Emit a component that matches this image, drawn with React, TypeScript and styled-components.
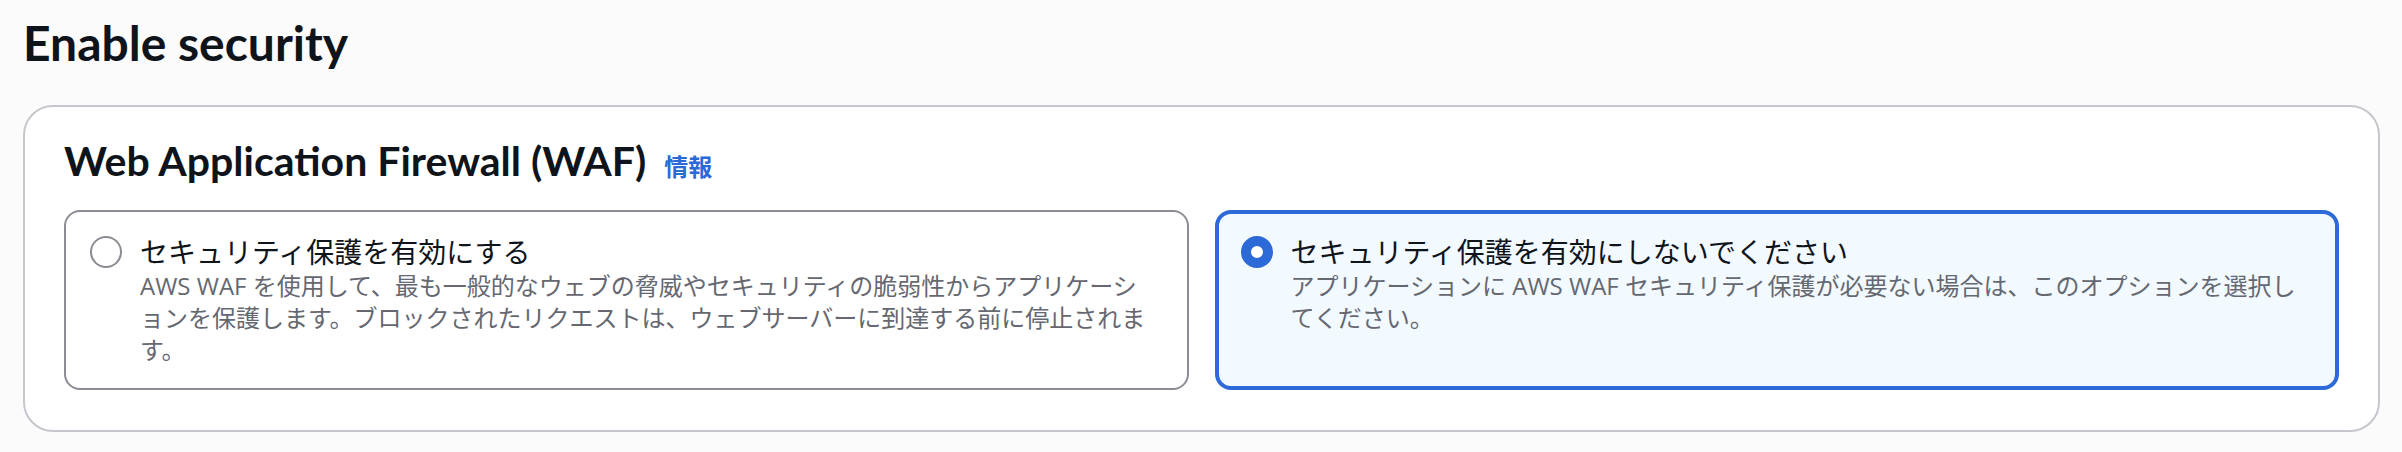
import React from 'react';
import styled, { createGlobalStyle } from 'styled-components';

const GlobalStyle = createGlobalStyle`
  html, body {
    margin: 0;
    padding: 0;
    background: #fbfbfb;
  }
  body {
    font-family: 'Open Sans', 'Noto Sans CJK JP', sans-serif;
    color: #0f141a;
  }
`;

const Page = styled.div`
  padding: 14px 22px 20px 23px;
`;

const PageTitle = styled.h1`
  margin: 0 0 33px;
  font-family: Lato, 'Noto Sans CJK JP', sans-serif;
  font-weight: 700;
  font-size: 48px;
  line-height: 58px;
  color: #0f141a;
`;

const Container = styled.section`
  background: #ffffff;
  border: 2px solid #c6c6cd;
  border-radius: 30px;
  padding: 30px 39px 40px;
`;

const Header = styled.div`
  display: flex;
  align-items: baseline;
  margin-bottom: 25px;
`;

const SectionTitle = styled.h2`
  margin: 0;
  font-family: Lato, 'Noto Sans CJK JP', sans-serif;
  font-weight: 700;
  font-size: 41px;
  line-height: 48px;
  color: #0f141a;
`;

const InfoLink = styled.a`
  margin-left: 18px;
  font-family: 'Noto Sans CJK JP', sans-serif;
  font-size: 24px;
  font-weight: 700;
  color: #2a6ad8;
  text-decoration: none;
`;

const Tiles = styled.div`
  display: grid;
  grid-template-columns: 1fr 1fr;
  gap: 26px;
`;

const Tile = styled.label<{ $selected?: boolean }>`
  display: flex;
  gap: 18px;
  border-radius: 16px;
  background: ${(p) => (p.$selected ? '#f2f9ff' : '#ffffff')};
  border: ${(p) => (p.$selected ? '4px solid #2c6ad8' : '2px solid #8c8c94')};
  padding: ${(p) => (p.$selected ? '20px 22px' : '22px 24px')};
  cursor: pointer;
`;

const Radio = styled.span<{ $checked?: boolean }>`
  flex: 0 0 auto;
  box-sizing: border-box;
  width: 32px;
  height: 32px;
  margin-top: 2px;
  border-radius: 50%;
  background: #ffffff;
  border: ${(p) => (p.$checked ? '10px solid #2c6ad8' : '2.5px solid #8c8c94')};
`;

const TileText = styled.div`
  display: flex;
  flex-direction: column;
  min-width: 0;
  padding-right: 11px;
`;

const TileLabel = styled.span`
  font-size: 28px;
  line-height: 36px;
  color: #0f141a;
`;

const TileDescription = styled.span`
  font-size: 24px;
  line-height: 32px;
  color: #656871;
`;

type Option = {
  id: string;
  label: string;
  description: string;
};

const options: Option[] = [
  {
    id: 'enable',
    label: 'セキュリティ保護を有効にする',
    description:
      'AWS WAF を使用して、最も一般的なウェブの脅威やセキュリティの脆弱性からアプリケーションを保護します。ブロックされたリクエストは、ウェブサーバーに到達する前に停止されます。',
  },
  {
    id: 'disable',
    label: 'セキュリティ保護を有効にしないでください',
    description:
      'アプリケーションに AWS WAF セキュリティ保護が必要ない場合は、このオプションを選択してください。',
  },
];

export default function App() {
  const [selected, setSelected] = React.useState('disable');

  return (
    <>
      <GlobalStyle />
      <Page>
        <PageTitle>Enable security</PageTitle>
        <Container>
          <Header>
            <SectionTitle>Web Application Firewall (WAF)</SectionTitle>
            <InfoLink href="#">情報</InfoLink>
          </Header>
          <Tiles>
            {options.map((o) => (
              <Tile
                key={o.id}
                $selected={selected === o.id}
                onClick={() => setSelected(o.id)}
              >
                <Radio $checked={selected === o.id} />
                <TileText>
                  <TileLabel>{o.label}</TileLabel>
                  <TileDescription>{o.description}</TileDescription>
                </TileText>
              </Tile>
            ))}
          </Tiles>
        </Container>
      </Page>
    </>
  );
}
